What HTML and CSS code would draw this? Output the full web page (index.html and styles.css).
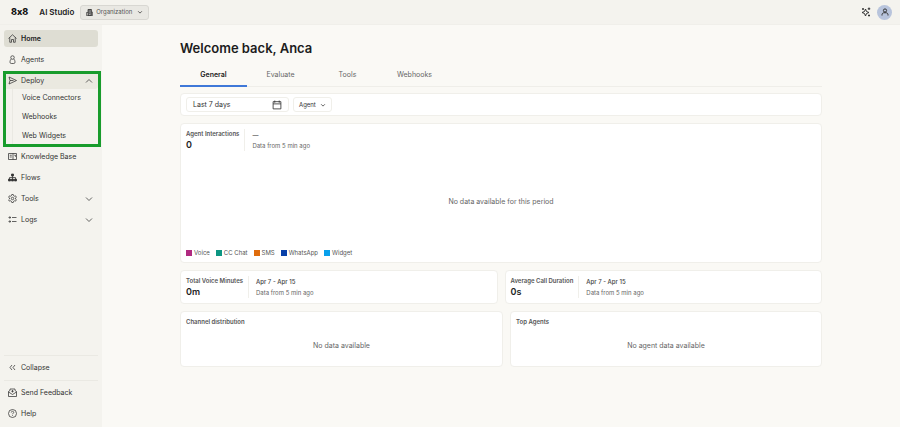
FILE: index.html
```html
<!DOCTYPE html>
<html lang="en">
<head>
  <meta charset="UTF-8">
  <meta name="viewport" content="width=device-width, initial-scale=1.0">
  <title>8x8 AI Studio</title>
  <link rel="stylesheet" href="styles.css">
</head>
<body>

  <header class="topbar">
    <span class="logo">8x8</span>
    <span class="product">AI Studio</span>
    <button type="button" class="org-button">
      <svg class="org-icon" viewBox="0 0 16 16"><path fill="#aaa" d="M5 1h7v14H5z"/><path d="M5 5V1h7v14H1V8h4M5 5v10M12 7h3v8h-3M7 4h3M7 7h3M7 10h3"/></svg>
      Organization
      <svg class="caret" viewBox="0 0 16 16"><path d="M3 6l5 5 5-5"/></svg>
    </button>
    <div class="topbar-right">
      <button type="button" class="icon-button" aria-label="What's new">
        <svg class="sparkle" viewBox="0 0 20 20"><path d="M9 4l2 5 5 2-5 2-2 5-2-5-5-2 5-2z"/><path d="M16 1v5M13.500 3.500h5M4 2v4M2 4h4M16 15v4M14 17h4"/></svg>
      </button>
      <button type="button" class="avatar" aria-label="Account">
        <svg class="avatar-icon" viewBox="0 0 16 16"><circle cx="8" cy="5" r="3.2"/><path d="M2 15v-1.500c0-2.500 2-4 4-4h4c2 0 4 1.500 4 4V15"/></svg>
      </button>
    </div>
  </header>

  <div class="layout">
    <aside class="sidebar">
      <ul class="nav">
        <li><a href="#" class="nav-item active">
          <svg class="icon" viewBox="0 0 18 18"><path d="M1 9l8-7.500L17 9M3.500 7v9.500H7V11h4v5.500h3.500V7"/></svg>Home</a></li>
        <li><a href="#" class="nav-item">
          <svg class="icon" viewBox="0 0 18 18"><circle cx="9" cy="5" r="3.500"/><path d="M6.500 8C4.500 10 4 12 4 14.500c0 1.500 1 2.500 2.500 2.500h5c1.500 0 2.500-1 2.500-2.500 0-2.500-.5-4.500-2.500-6.500"/></svg>Agents</a></li>
        <li class="nav-group">
          <a href="#" class="nav-item open">
            <svg class="icon" viewBox="0 0 18 18"><path d="M2 2l15 7-15 7 2-7zM4 9h7"/></svg>Deploy
            <svg class="chevron" viewBox="0 0 16 16"><path d="M2 11l6-6 6 6"/></svg></a>
          <ul class="subnav">
            <li><a href="#">Voice Connectors</a></li>
            <li><a href="#">Webhooks</a></li>
            <li><a href="#">Web Widgets</a></li>
          </ul>
        </li>
        <li><a href="#" class="nav-item">
          <svg class="icon" viewBox="0 0 18 18"><path d="M1 3h16v12H1zM10 3v12M3.500 6.500h4M3.500 10h4M12.500 6.500h2.500v3"/></svg>Knowledge Base</a></li>
        <li><a href="#" class="nav-item">
          <svg class="icon" viewBox="0 0 18 18"><path fill="#333" d="M7 2h4v4H7zM1 12h4v4H1zM7 12h4v4H7zM13 12h4v4h-4z"/><path d="M9 6v6M3 12V9h12v3"/></svg>Flows</a></li>
        <li><a href="#" class="nav-item">
          <svg class="icon" viewBox="0 0 18 18"><path d="M7.500 1h3l.6 2.400 1.700 1 2.400-.7 1.500 2.600L15 8v2l1.700 1.700-1.500 2.600-2.400-.7-1.700 1-.6 2.400h-3l-.6-2.400-1.700-1-2.400.7-1.500-2.600L3 10V8L1.300 6.300l1.500-2.600 2.400.7 1.700-1z"/><circle cx="9" cy="9" r="2.500"/></svg>Tools
          <svg class="chevron" viewBox="0 0 16 16"><path d="M2 5l6 6 6-6"/></svg></a></li>
        <li><a href="#" class="nav-item">
          <svg class="icon" viewBox="0 0 18 18"><path d="M8 5h9M8 13h9M2 4h3v2H2zM2 12h3v2H2z"/></svg>Logs
          <svg class="chevron" viewBox="0 0 16 16"><path d="M2 5l6 6 6-6"/></svg></a></li>
      </ul>

      <ul class="nav nav-bottom">
        <li class="divided"><button type="button" class="nav-item">
          <svg class="icon" viewBox="0 0 18 18"><path d="M8 4L4 9l4 5M14 4l-4 5 4 5"/></svg>Collapse</button></li>
        <li class="divided"><a href="#" class="nav-item">
          <svg class="icon" viewBox="0 0 18 18"><path d="M1 7l3-2V2h10v3l3 2v10H1zM1 8l8 5 8-5M9 4v5M6.500 6.500h5"/></svg>Send Feedback</a></li>
        <li><a href="#" class="nav-item">
          <svg class="icon" viewBox="0 0 18 18"><circle cx="9" cy="9" r="8"/><path d="M6.500 7c0-3.500 5-3 5-.2C11.500 8.500 9 8.500 9 10.500M9 12.500V14"/></svg>Help</a></li>
      </ul>
    </aside>

    <main class="content">
      <h1>Welcome back, Anca</h1>

      <div class="tabs" role="tablist">
        <button type="button" role="tab" class="tab selected" aria-selected="true">General</button>
        <button type="button" role="tab" class="tab">Evaluate</button>
        <button type="button" role="tab" class="tab">Tools</button>
        <button type="button" role="tab" class="tab">Webhooks</button>
      </div>

      <div class="card filters">
        <button type="button" class="filter date-filter">Last 7 days
          <svg class="calendar" viewBox="0 0 18 18"><path d="M2 3h14v13H2zM2 7h14M5 1v4M13 1v4"/></svg>
        </button>
        <button type="button" class="filter agent-filter">Agent
          <svg class="caret" viewBox="0 0 16 16"><path d="M3 6l5 5 5-5"/></svg>
        </button>
      </div>

      <section class="card interactions">
        <div class="stat">
          <div class="stat-main">
            <h2>Agent Interactions</h2>
            <strong>0</strong>
          </div>
          <div class="stat-info">
            <span class="period">—</span>
            <span>Data from 5 min ago</span>
          </div>
        </div>
        <p class="empty">No data available for this period</p>
        <ul class="legend">
          <li><i class="swatch voice"></i>Voice</li>
          <li><i class="swatch chat"></i>CC Chat</li>
          <li><i class="swatch sms"></i>SMS</li>
          <li><i class="swatch whatsapp"></i>WhatsApp</li>
          <li><i class="swatch widget"></i>Widget</li>
        </ul>
      </section>

      <div class="row">
        <section class="card stat">
          <div class="stat-main">
            <h2>Total Voice Minutes</h2>
            <strong>0m</strong>
          </div>
          <div class="stat-info">
            <span class="period">Apr 7 - Apr 15</span>
            <span>Data from 5 min ago</span>
          </div>
        </section>
        <section class="card stat">
          <div class="stat-main">
            <h2>Average Call Duration</h2>
            <strong>0s</strong>
          </div>
          <div class="stat-info">
            <span class="period">Apr 7 - Apr 15</span>
            <span>Data from 5 min ago</span>
          </div>
        </section>
      </div>

      <div class="row row-wide-left">
        <section class="card panel">
          <h2>Channel distribution</h2>
          <p class="empty">No data available</p>
        </section>
        <section class="card panel">
          <h2>Top Agents</h2>
          <p class="empty">No agent data available</p>
        </section>
      </div>
    </main>
  </div>

</body>
</html>
```

FILE: styles.css
```css
* {
  box-sizing: border-box;
}

body {
  display: flex;
  flex-direction: column;
  min-height: 100vh;
  margin: 0;
  background: #faf9f5;
  color: #333;
  font-family: Inter, "Liberation Sans", sans-serif;
  font-size: 7px;
  line-height: 10px;
}

h1, h2, p, ul {
  margin: 0;
  padding: 0;
}

ul {
  list-style: none;
}

a {
  color: inherit;
  text-decoration: none;
}

button {
  border: 0;
  padding: 0;
  background: none;
  color: inherit;
  font: inherit;
}

svg {
  flex: none;
  fill: none;
  stroke: #333;
  stroke-width: 1.5;
}

/* top bar */
.topbar {
  display: flex;
  align-items: center;
  height: 25px;
  padding: 0 8px 0 11px;
  background: #f4f3ee;
  border-bottom: 1px solid #f0efea;
}

.logo {
  color: #111;
  font-size: 9px;
  font-weight: 800;
  font-feature-settings: "calt" 0;
}

.product {
  margin-left: 11px;
  color: #222;
  font-size: 8px;
  font-weight: 600;
}

.org-button {
  display: flex;
  align-items: center;
  gap: 3px;
  height: 15px;
  margin-left: 6px;
  padding: 0 5px;
  border: 1px solid #d8d7d2;
  border-radius: 3px;
  background: #e9e8e3;
  color: #555;
  font-size: 6px;
}

.org-icon {
  width: 7px;
  height: 7px;
}

.caret {
  width: 6px;
  height: 6px;
  stroke-width: 2;
}

.org-button .caret {
  margin-left: 2px;
}

.topbar-right {
  display: flex;
  align-items: center;
  gap: 6px;
  margin-left: auto;
}

.icon-button {
  display: flex;
}

.sparkle {
  width: 10px;
  height: 10px;
  stroke-width: 2;
}

.avatar {
  display: flex;
  align-items: center;
  justify-content: center;
  width: 15px;
  height: 15px;
  border-radius: 50%;
  background: #b8c4dc;
}

.avatar-icon {
  width: 8px;
  height: 8px;
  stroke-width: 2;
}

/* sidebar */
.layout {
  display: flex;
  flex: 1;
}

.sidebar {
  display: flex;
  flex: none;
  flex-direction: column;
  justify-content: space-between;
  width: 102px;
  padding: 5px 4px;
  background: #f4f3ee;
}

.nav > li + li {
  margin-top: 4px;
}

.nav-item {
  display: flex;
  align-items: center;
  gap: 4px;
  width: 100%;
  height: 17px;
  padding: 0 5px 0 4px;
  border-radius: 3px;
}

.nav-item.active {
  background: #deddd3;
  color: #222;
  font-weight: 600;
}

.nav-item.open {
  background: #eae9e0;
}

.icon {
  width: 9px;
  height: 9px;
}

.chevron {
  width: 8px;
  height: 8px;
  margin-left: auto;
}

.nav-group {
  position: relative;
}

/* highlight frame around the open group */
.nav-group::after {
  content: "";
  position: absolute;
  inset: -1px -3px -3px -1px;
  border: 3px solid #189c2c;
  pointer-events: none;
}

.subnav {
  display: flex;
  flex-direction: column;
  gap: 3px;
  margin-left: 8px;
  padding: 1px 0 0 9px;
  border-left: 1px solid #eae9e3;
}

.subnav a {
  display: flex;
  align-items: center;
  height: 16px;
}

.nav-bottom .divided {
  padding-top: 3px;
  border-top: 1px solid #eae9e3;
}

/* content */
.content {
  display: flex;
  flex: 1;
  flex-direction: column;
  padding: 14px 78px;
}

h1 {
  color: #1c1c1c;
  font-size: 13px;
  font-weight: 600;
  line-height: 18px;
}

.tabs {
  display: flex;
  height: 23px;
  margin: 7px 0 6px;
  border-bottom: 1px solid #efeee9;
}

.tab {
  width: 67px;
  height: 23px;
  border-bottom: 2px solid transparent;
  color: #666;
}

.tab.selected {
  border-color: #3f78d8;
  color: #222;
  font-weight: 600;
}

.card {
  border: 1px solid #f0efea;
  border-radius: 4px;
  background: #fff;
}

.filters {
  display: flex;
  gap: 4px;
  padding: 3px 5px;
}

.filter {
  display: flex;
  align-items: center;
  height: 15px;
  padding: 0 6px;
  border: 1px solid #f0efea;
  border-radius: 3px;
}

.date-filter {
  justify-content: space-between;
  width: 103px;
}

.agent-filter {
  gap: 4px;
  padding: 0 5px;
  font-size: 6px;
}

.calendar {
  width: 10px;
  height: 10px;
}

.interactions {
  display: flex;
  flex-direction: column;
  min-height: 140px;
  margin-top: 7px;
}

.stat {
  display: flex;
  padding: 5px;
}

.stat-main {
  padding-right: 5px;
  border-right: 1px solid #f0efea;
}

h2 {
  color: #555;
  font-size: 6px;
  font-weight: 600;
  line-height: 9px;
}

.stat-main strong {
  display: block;
  margin-top: 1px;
  color: #222;
  font-size: 9px;
  font-weight: 600;
  line-height: 12px;
}

.stat-info {
  display: flex;
  flex-direction: column;
  justify-content: space-between;
  padding: 1px 7px 0;
  color: #666;
  font-size: 6px;
}

.period {
  color: #444;
  font-weight: 500;
}

.empty {
  color: #666;
  text-align: center;
}

.interactions .empty {
  margin: auto 0;
}

.legend {
  display: flex;
  gap: 6px;
  padding: 0 5px 4px;
  color: #555;
  font-size: 6px;
}

.legend li {
  display: flex;
  align-items: center;
  gap: 2px;
}

.swatch {
  width: 6px;
  height: 6px;
}

.voice { background: #b02a80; }
.chat { background: #0c9682; }
.sms { background: #df6c0c; }
.whatsapp { background: #0840a8; }
.widget { background: #08a0ec; }

.row {
  display: grid;
  grid-template-columns: 1fr 1fr;
  gap: 7px;
  margin-top: 7px;
}

.row-wide-left {
  grid-template-columns: 323fr 312fr;
}

.panel {
  min-height: 56px;
  padding: 5px;
}

.panel .empty {
  margin-top: 15px;
}
```
